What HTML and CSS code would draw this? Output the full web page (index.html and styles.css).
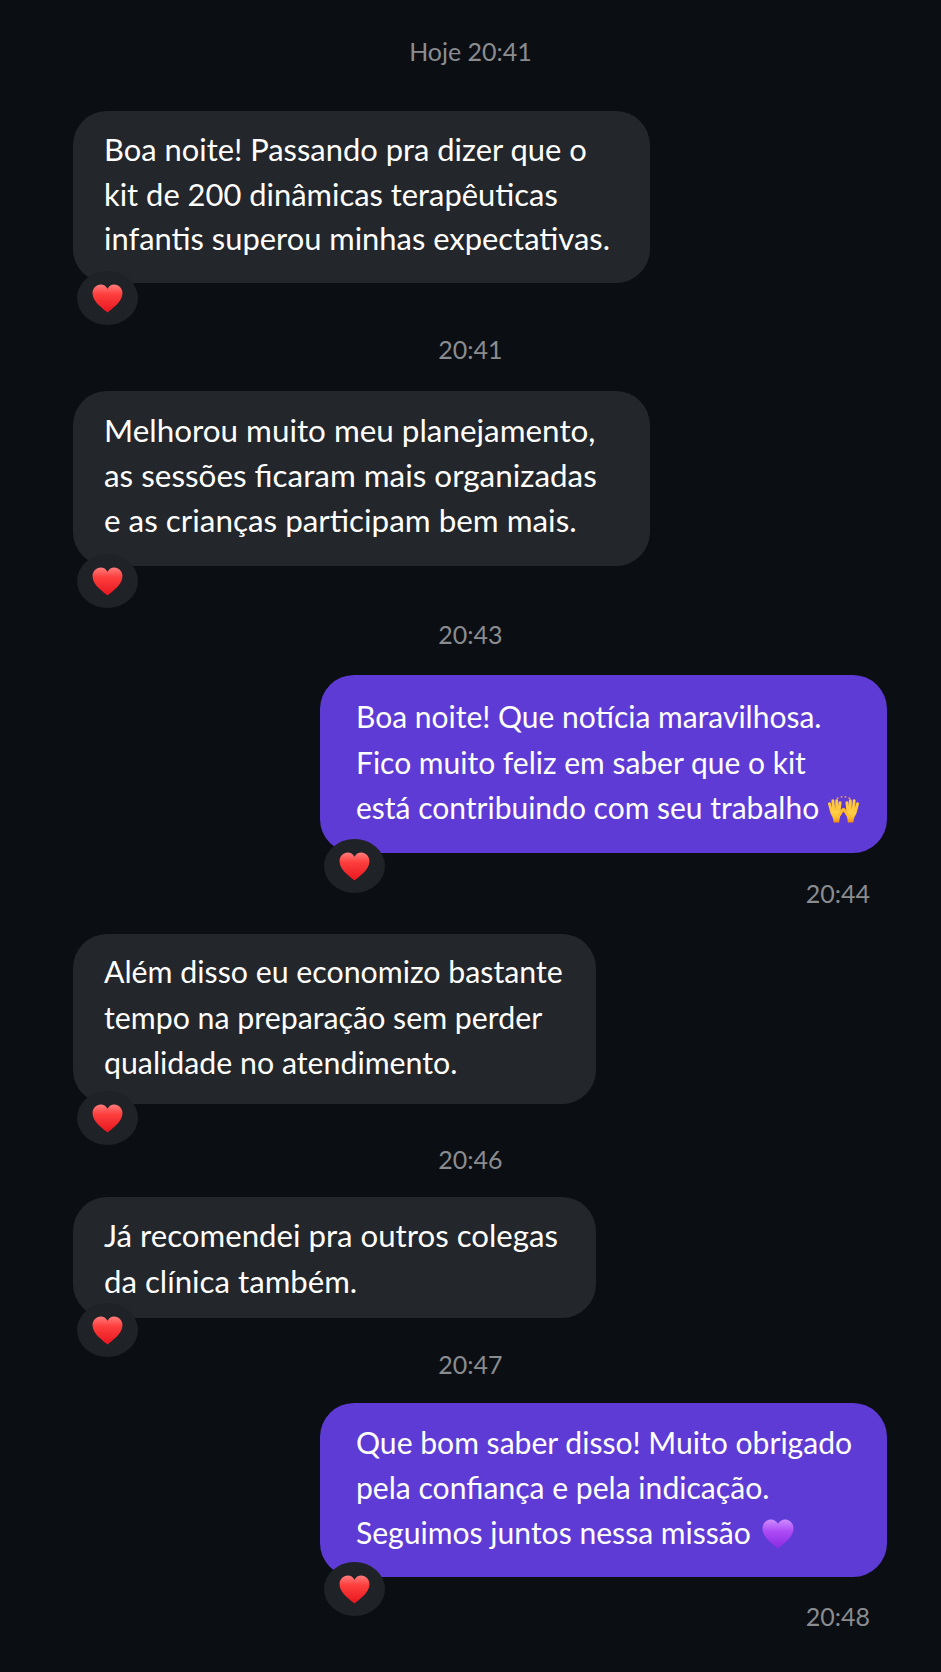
FILE: index.html
```html
<!DOCTYPE html>
<html lang="pt-BR">
<head>
    <meta charset="UTF-8">
    <meta name="viewport" content="width=device-width, initial-scale=1.0">
    <title>Conversa</title>
    <link rel="stylesheet" href="styles.css">
</head>
<body>
    <svg class="defs" width="0" height="0">
        <defs>
            <linearGradient id="redHeart" x1="0" y1="0" x2="0" y2="1">
                <stop offset="0" stop-color="#ff7d7d"/>
                <stop offset="0.35" stop-color="#fd3f3d"/>
                <stop offset="1" stop-color="#e8161f"/>
            </linearGradient>
            <linearGradient id="purpleHeart" x1="0" y1="0" x2="0" y2="1">
                <stop offset="0" stop-color="#cf8bff"/>
                <stop offset="0.4" stop-color="#ad4bf5"/>
                <stop offset="1" stop-color="#8a2be2"/>
            </linearGradient>
            <linearGradient id="handFill" x1="0" y1="0" x2="0" y2="1">
                <stop offset="0" stop-color="#ffdc55"/>
                <stop offset="0.65" stop-color="#fdbb30"/>
                <stop offset="1" stop-color="#ef8a12"/>
            </linearGradient>
            <symbol id="heart" viewBox="0 0 32 30">
                <path d="M16 29.500C13 26.500 .5 19 .5 9.500 .5 4.200 4.500 .5 9 .5c3 0 5.500 1.600 7 4.300C17.500 2.100 20 .5 23 .5c4.500 0 8.500 3.700 8.500 9 0 9.500-12.500 17-15.500 20z"/>
            </symbol>
            <symbol id="hand" viewBox="0 0 17 28" overflow="visible">
                <path d="M3.500 14H14v6l-1 4-.5 4H7l-1-5-2.500-5z" fill="url(#handFill)"/>
                <path d="M4.500 16 2.500 8.500M7 15 6 5.500M10 15V5.500M12.500 15 13.500 7.500" stroke="#fec83f" stroke-width="3" stroke-linecap="round" fill="none"/>
                <path d="M13 20 16.500 14.500" stroke="#fdbb30" stroke-width="3" stroke-linecap="round" fill="none"/>
            </symbol>
        </defs>
    </svg>

    <main class="chat">
        <p class="time time-first">Hoje 20:41</p>

        <div class="msg in wide m1">
            <p class="bubble">Boa noite! Passando pra dizer que o<br>kit de 200 dinâmicas terapêuticas<br>infantis superou minhas expectativas.</p>
            <span class="reaction"><svg class="heart-red"><use href="#heart"/></svg></span>
        </div>
        <p class="time t2">20:41</p>

        <div class="msg in wide m2">
            <p class="bubble">Melhorou muito meu planejamento,<br>as sessões ficaram mais organizadas<br>e as crianças participam bem mais.</p>
            <span class="reaction"><svg class="heart-red"><use href="#heart"/></svg></span>
        </div>
        <p class="time t3">20:43</p>

        <div class="msg out m3">
            <p class="bubble">Boa noite! Que notícia maravilhosa.<br>Fico muito feliz em saber que o kit<br>está contribuindo com seu trabalho
                <svg class="emoji" viewBox="0 0 34 28">
                    <use href="#hand" width="17" height="28"/>
                    <use href="#hand" width="17" height="28" transform="translate(34) scale(-1 1)"/>
                    <g fill="#f2a02e">
                        <circle cx="11" cy="3" r="1"/>
                        <circle cx="15" cy="1.500" r="1"/>
                        <circle cx="19" cy="1.500" r="1"/>
                        <circle cx="23" cy="3" r="1"/>
                    </g>
                </svg>
            </p>
            <span class="reaction"><svg class="heart-red"><use href="#heart"/></svg></span>
        </div>
        <p class="time sent s3">20:44</p>

        <div class="msg in narrow m4">
            <p class="bubble">Além disso eu economizo bastante<br>tempo na preparação sem perder<br>qualidade no atendimento.</p>
            <span class="reaction"><svg class="heart-red"><use href="#heart"/></svg></span>
        </div>
        <p class="time t5">20:46</p>

        <div class="msg in narrow m5">
            <p class="bubble">Já recomendei pra outros colegas<br>da clínica também.</p>
            <span class="reaction"><svg class="heart-red"><use href="#heart"/></svg></span>
        </div>
        <p class="time t6">20:47</p>

        <div class="msg out m6">
            <p class="bubble">Que bom saber disso! Muito obrigado<br>pela confiança e pela indicação.<br>Seguimos juntos nessa missão
                <svg class="emoji emoji-heart heart-purple"><use href="#heart"/></svg>
            </p>
            <span class="reaction"><svg class="heart-red"><use href="#heart"/></svg></span>
        </div>
        <p class="time sent s6">20:48</p>
    </main>
</body>
</html>
```

FILE: styles.css
```css
* {
    box-sizing: border-box;
}

html, body {
    margin: 0;
    padding: 0;
}

body {
    height: 1672px;
    overflow: hidden;
    background: #0b0e13;
    color: #fff;
    font-family: "Lato", "Noto Sans", sans-serif;
}

p {
    margin: 0;
}

.defs {
    position: absolute;
}

.chat {
    display: flex;
    flex-direction: column;
    padding-top: 37px;
}

/* timestamps */
.time {
    font-size: 25px;
    line-height: 28px;
    color: #8a8c90;
    text-align: center;
}

.time-first {
    margin-bottom: 46px;
}

.t2 {
    margin-top: 52px;
    margin-bottom: 28px;
}

.t3 {
    margin-top: 54px;
    margin-bottom: 27px;
}

.t5 {
    margin-top: 41px;
    margin-bottom: 24px;
}

.t6 {
    margin-top: 32px;
    margin-bottom: 25px;
}

.sent {
    text-align: right;
    margin-right: 71px;
}

.s3 {
    margin-top: 26px;
    margin-bottom: 27px;
}

.s6 {
    margin-top: 25px;
}

/* messages */
.msg {
    position: relative;
}

.in {
    margin-left: 73px;
}

.in.wide {
    width: 577px;
}

.in.narrow {
    width: 523px;
}

.out {
    width: 567px;
    margin-right: 54px;
    align-self: flex-end;
}

.bubble {
    font-size: 30px;
    padding-left: 31px;
    border-radius: 34px;
    background: #23262b;
    white-space: nowrap;
}

.out .bubble {
    background: #5f3bd6;
    padding-left: 36px;
}

.m1 .bubble {
    font-size: 30.900px;
    line-height: 44.500px;
    padding-top: 17px;
    padding-bottom: 21.500px;
}

.m2 .bubble {
    font-size: 31.400px;
    line-height: 45px;
    padding-top: 16.500px;
    padding-bottom: 23.500px;
}

.m3 .bubble {
    line-height: 45.500px;
    padding-top: 19px;
    padding-bottom: 22.500px;
}

.m4 .bubble {
    font-size: 30.300px;
    line-height: 45.500px;
    padding-top: 15px;
    padding-bottom: 18.500px;
}

.m5 .bubble {
    font-size: 31.200px;
    line-height: 46px;
    padding-top: 15px;
    padding-bottom: 14px;
}

.m6 .bubble {
    font-size: 30.100px;
    line-height: 45px;
    padding-top: 17px;
    padding-bottom: 22px;
}

/* heart badge over the bubble corner */
.reaction {
    position: absolute;
    left: 4px;
    top: calc(100% - 12px);
    display: flex;
    align-items: center;
    justify-content: center;
    width: 61px;
    height: 54px;
    border-radius: 50%;
    background: #1f2227;
}

.m3 .reaction {
    top: calc(100% - 14px);
}

.m4 .reaction {
    top: calc(100% - 13px);
}

.m5 .reaction,
.m6 .reaction {
    top: calc(100% - 15px);
}

.reaction svg {
    width: 31px;
    height: 29px;
}

.heart-red {
    fill: url(#redHeart);
}

.heart-purple {
    fill: url(#purpleHeart);
}

.emoji {
    width: 33px;
    height: 28px;
    vertical-align: -4px;
}

.emoji-heart {
    width: 32px;
    height: 30px;
    margin-left: 3px;
    vertical-align: -5px;
}
```
